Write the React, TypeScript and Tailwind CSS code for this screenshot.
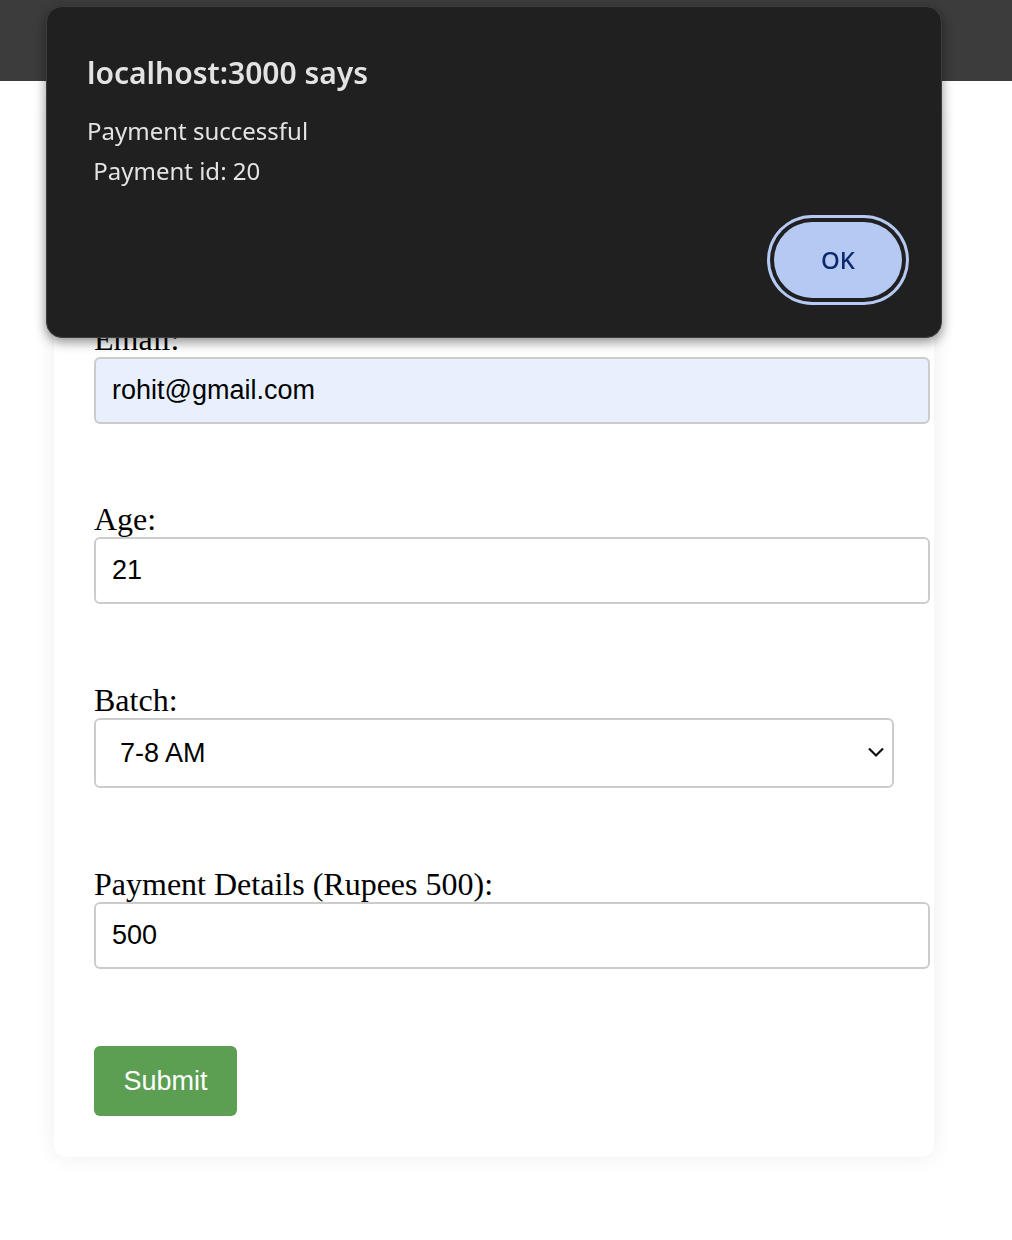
import { useState } from "react";

const Field = ({
  label,
  value,
  bg = "bg-white",
  mb = "mb-[77px]",
}: {
  label: string;
  value: string;
  bg?: string;
  mb?: string;
}) => (
  <div className={mb}>
    <label className="block font-['Liberation_Serif',serif] text-[32px] leading-[36px] text-black">
      {label}
    </label>
    <input
      readOnly
      value={value}
      className={`block h-[67px] w-[836px] rounded-[6px] border-2 border-[#cccccc] ${bg} px-4 font-['Liberation_Sans',Arial,sans-serif] text-[27px] text-black outline-none`}
    />
  </div>
);

const App = () => {
  const [open, setOpen] = useState(true);

  return (
    <div className="min-h-[1240px] bg-white">
      {/* Header */}
      <div className="h-[81px] w-full bg-[#3c3c3c]" />

      {/* Form card */}
      <div className="ml-[54px] mt-[20px] w-[880px] rounded-[12px] bg-white px-[40px] pb-[41px] pt-[40px] shadow-[0_0_22px_rgba(0,0,0,0.07)]">
        <Field label="Name:" value="Rohit" />
        <Field label="Email:" value="rohit@gmail.com" bg="bg-[#e8f0fe]" />
        <Field label="Age:" value="21" mb="mb-[78px]" />

        <div className="mb-[78px]">
          <label className="block font-['Liberation_Serif',serif] text-[32px] leading-[36px] text-black">
            Batch:
          </label>
          <div className="relative w-[800px]">
            <select
              defaultValue="7-8 AM"
              className="block h-[70px] w-[800px] appearance-none rounded-[6px] border-2 border-[#cccccc] bg-white pl-[24px] font-['Liberation_Sans',Arial,sans-serif] text-[27px] text-black outline-none"
            >
              <option>6-7 AM</option>
              <option>7-8 AM</option>
              <option>8-9 AM</option>
              <option>5-6 PM</option>
            </select>
            <svg
              className="pointer-events-none absolute right-[9px] top-[28px]"
              width="18"
              height="12"
              viewBox="0 0 18 12"
              fill="none"
            >
              <path
                d="M2 2.5L9 9.5L16 2.5"
                stroke="#111"
                strokeWidth="2.2"
              />
            </svg>
          </div>
        </div>

        <Field label="Payment Details (Rupees 500):" value="500" />

        <button className="h-[70px] w-[143px] rounded-[6px] bg-[#5c9e52] font-['Liberation_Sans',Arial,sans-serif] text-[27px] text-white">
          Submit
        </button>
      </div>

      {/* Alert dialog */}
      {open && (
        <div className="fixed left-[46px] top-[6px] h-[332px] w-[896px] rounded-[16px] border border-[#3e3e3e] bg-[#202020] px-[40px] pt-[46px] font-['Noto_Sans',sans-serif] text-[#e3e3e3] shadow-[0_4px_12px_rgba(0,0,0,0.45)]">
          <h2 className="text-[30px] font-semibold leading-[40px]">
            localhost:3000 says
          </h2>
          <div className="mt-[18px] text-[24px] leading-[40px]">
            <p>Payment successful</p>
            <p className="whitespace-pre">{" Payment id: 20"}</p>
          </div>
          <div className="-mr-px mt-[31px] flex justify-end">
            <button
              onClick={() => setOpen(false)}
              className="h-[76px] w-[128px] rounded-full bg-[#b6c9f3] text-[24px] font-medium text-[#0b2a6e] ring-[3px] ring-[#b6c9f3] ring-offset-[4px] ring-offset-[#202020]"
            >
              OK
            </button>
          </div>
        </div>
      )}
    </div>
  );
};

export default App;
